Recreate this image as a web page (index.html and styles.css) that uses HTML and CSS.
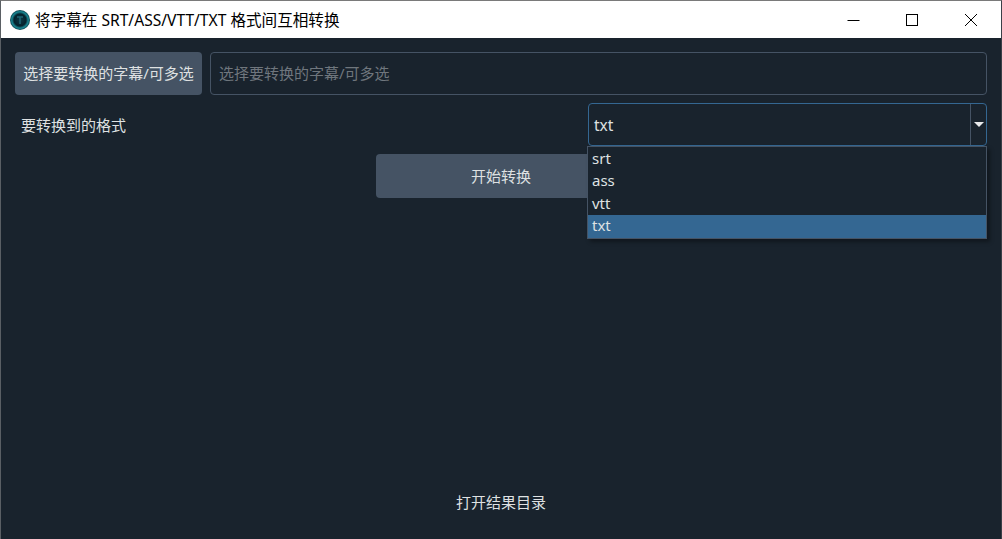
FILE: index.html
```html
<!DOCTYPE html>
<html lang="zh">
<head>
<meta charset="utf-8">
<title>将字幕在 SRT/ASS/VTT/TXT 格式间互相转换</title>
<link rel="stylesheet" href="styles.css">
</head>
<body>
<div class="window">
  <header class="titlebar">
    <svg class="app-icon" viewBox="0 0 20 20" width="20" height="20">
      <defs><radialGradient id="g" cx="50%" cy="50%" r="50%">
        <stop offset="0" stop-color="#0b3a48"/><stop offset="0.6" stop-color="#06222c"/><stop offset="0.82" stop-color="#1a8a96"/><stop offset="1" stop-color="#0a3a44"/>
      </radialGradient></defs>
      <circle cx="10" cy="10" r="10" fill="url(#g)"/>
      <path d="M7 7h6M10 7v7" stroke="#1f6472" stroke-width="1.600" fill="none"/>
    </svg>
    <span class="title">将字幕在 SRT/ASS/VTT/TXT 格式间互相转换</span>
    <div class="controls">
      <span class="ctl"><svg viewBox="0 0 14 14" width="14" height="14"><path d="M1.500 7.500h12" stroke="#000" stroke-width="1"/></svg></span>
      <span class="ctl"><svg viewBox="0 0 14 14" width="14" height="14"><rect x="1.500" y="1.500" width="11" height="11" fill="none" stroke="#000" stroke-width="1"/></svg></span>
      <span class="ctl"><svg viewBox="0 0 14 14" width="14" height="14"><path d="M1 1l12 12M13 1L1 13" stroke="#000" stroke-width="1" fill="none"/></svg></span>
    </div>
  </header>
  <main class="content">
    <div class="row-file">
      <button class="btn btn-file"><span class="lift">选择要转换的字幕/可多选</span></button>
      <div class="input"><span class="lift">选择要转换的字幕/可多选</span></div>
    </div>
    <div class="row-format">
      <label class="label">要转换到的格式</label>
      <div class="combo">
        <span class="combo-value">txt</span>
        <span class="combo-arrow"><i class="tri"></i></span>
        <ul class="popup">
          <li>srt</li>
          <li>ass</li>
          <li>vtt</li>
          <li class="selected">txt</li>
        </ul>
      </div>
    </div>
    <div class="row-start"><button class="btn btn-start"><span class="lift-small">开始转换</span></button></div>
    <div class="row-open">打开结果目录</div>
  </main>
</div>
</body>
</html>
```
FILE: styles.css
```css
* { box-sizing: border-box; }
html, body { margin: 0; padding: 0; height: 100%; overflow: hidden; }
body {
  font-family: "Noto Sans", "Noto Sans CJK SC", sans-serif;
  font-size: 15px;
  background: #19232d;
}
.window {
  width: 1002px;
  height: 539px;
  display: flex;
  flex-direction: column;
  border-top: 1px solid #7a7a7a;
  border-left: 1px solid #5a5f64;
  border-right: 1px solid #3a4048;
  background: #19232d;
  color: #dfe1e2;
}
.titlebar {
  height: 37px;
  flex: none;
  background: #fff;
  color: #000;
  display: flex;
  align-items: center;
  padding-left: 9px;
}
.app-icon { flex: none; }
.title { margin-left: 5px; font-size: 15.600px; white-space: nowrap; }
.controls { margin-left: auto; display: flex; padding-right: 1px; }
.ctl {
  width: 59px;
  height: 37px;
  display: flex;
  align-items: center;
  justify-content: center;
}
.content {
  flex: 1;
  display: flex;
  flex-direction: column;
  padding: 14px 14px 0;
}
.row-file { display: flex; gap: 8px; height: 43px; }
.lift { display: block; padding-bottom: 3px; }
.lift-small { display: block; padding-bottom: 1px; }
.btn {
  border: 0;
  border-radius: 4px;
  background: #455364;
  color: #dfe1e2;
  font: inherit;
  padding: 0;
}
.btn-file { width: 187px; flex: none; }
.input {
  flex: 1;
  border: 1px solid #455364;
  border-radius: 4px;
  color: #6f767d;
  display: flex;
  align-items: center;
  padding-left: 8px;
}
.row-format {
  display: flex;
  justify-content: space-between;
  align-items: center;
  height: 43px;
  margin-top: 8px;
}
.label { padding-left: 6px; padding-bottom: 1px; }
.combo {
  position: relative;
  width: 399px;
  height: 43px;
  border: 1px solid #346792;
  border-radius: 4px;
  display: flex;
  align-items: center;
  justify-content: space-between;
}
.combo-value { padding-left: 5px; padding-top: 1px; font-size: 15.500px; }
.combo-arrow {
  width: 16px;
  height: 100%;
  border-left: 1px solid #455364;
  display: flex;
  align-items: center;
  justify-content: center;
}
.tri {
  width: 0;
  height: 0;
  border-left: 5px solid transparent;
  border-right: 5px solid transparent;
  border-top: 5px solid #e8eaeb;
}
.popup {
  position: absolute;
  z-index: 2;
  left: -2px;
  top: 42px;
  width: 400px;
  height: 93px;
  margin: 0;
  padding: 1px 0;
  list-style: none;
  background: #19232d;
  border: 1px solid #455364;
  box-shadow: 3px 3px 4px rgba(0, 0, 0, 0.35);
}
.popup li {
  height: 22.400px;
  line-height: 20px;
  padding-left: 4px;
}
.popup .selected { background: #346792; }
.row-start { display: flex; justify-content: center; margin-top: 8px; }
.btn-start { width: 250px; height: 44px; }
.row-open {
  margin-top: auto;
  height: 37px;
  margin-bottom: 19px;
  display: flex;
  align-items: center;
  justify-content: center;
}
```
